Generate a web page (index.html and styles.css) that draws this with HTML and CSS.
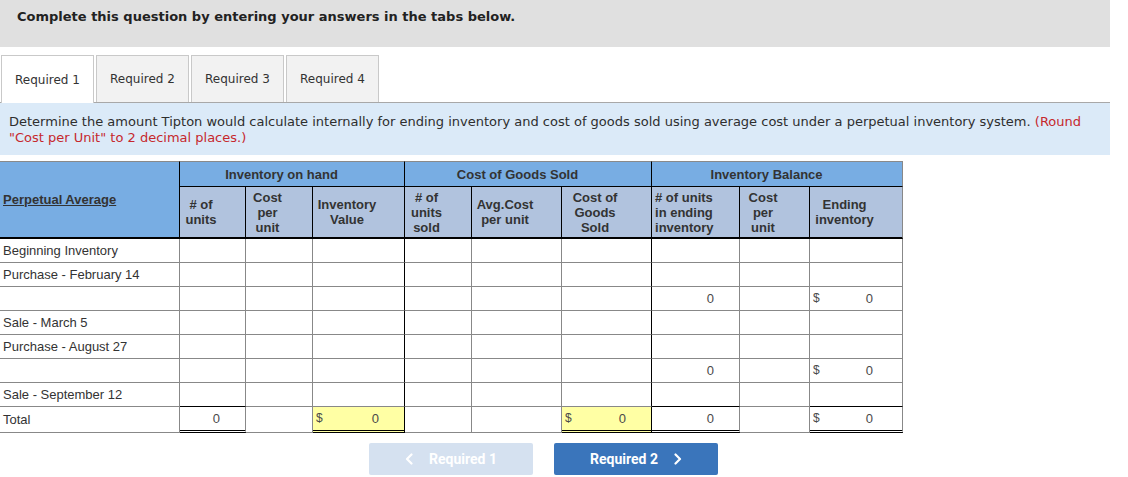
FILE: index.html
```html
<!DOCTYPE html>
<html>
<head>
<meta charset="utf-8">
<title>Perpetual Average</title>
<link rel="stylesheet" href="styles.css">
</head>
<body>
<div class="page">
  <div class="banner">Complete this question by entering your answers in the tabs below.</div>

  <div class="tabs">
    <div class="tab active">Required 1</div>
    <div class="tab">Required 2</div>
    <div class="tab">Required 3</div>
    <div class="tab">Required 4</div>
  </div>

  <div class="prompt">Determine the amount Tipton would calculate internally for ending inventory and cost of goods sold using average cost under a perpetual inventory system. <span class="red">(Round<br>"Cost per Unit" to 2 decimal places.)</span></div>

  <table class="grid">
    <colgroup>
      <col class="c-label">
      <col class="c66"><col class="c67"><col class="c92">
      <col class="c67"><col class="c90"><col class="c90">
      <col class="c88"><col class="c70"><col class="c93">
    </colgroup>
    <thead>
      <tr class="grp-row">
        <th rowspan="2" class="label-head"><span class="u">Perpetual Average</span></th>
        <th colspan="3" class="grp">Inventory on hand</th>
        <th colspan="3" class="grp">Cost of Goods Sold</th>
        <th colspan="3" class="grp last">Inventory Balance</th>
      </tr>
      <tr class="sub-row">
        <th class="sub">#&nbsp;of<br>units</th>
        <th class="sub">Cost<br>per<br>unit</th>
        <th class="sub">Inventory<br>Value</th>
        <th class="sub">#&nbsp;of<br>units<br>sold</th>
        <th class="sub">Avg.Cost<br>per unit</th>
        <th class="sub">Cost of<br>Goods<br>Sold</th>
        <th class="sub left">#&nbsp;of units<br>in ending<br>inventory</th>
        <th class="sub">Cost<br>per<br>unit</th>
        <th class="sub last">Ending<br>inventory</th>
      </tr>
    </thead>
    <tbody>
      <tr>
        <td class="lbl">Beginning Inventory</td>
        <td></td><td></td><td class="br"></td><td></td><td></td><td class="br"></td><td></td><td></td><td></td>
      </tr>
      <tr>
        <td class="lbl">Purchase - February 14</td>
        <td></td><td></td><td class="br"></td><td></td><td></td><td class="br"></td><td></td><td></td><td></td>
      </tr>
      <tr>
        <td class="lbl"></td>
        <td></td><td></td><td class="br"></td><td></td><td></td><td class="br"></td>
        <td class="num">0</td><td></td><td class="num money wide"><span class="dol">$</span>0</td>
      </tr>
      <tr>
        <td class="lbl">Sale - March 5</td>
        <td></td><td></td><td class="br"></td><td></td><td></td><td class="br"></td><td></td><td></td><td></td>
      </tr>
      <tr>
        <td class="lbl">Purchase - August 27</td>
        <td></td><td></td><td class="br"></td><td></td><td></td><td class="br"></td><td></td><td></td><td></td>
      </tr>
      <tr>
        <td class="lbl"></td>
        <td></td><td></td><td class="br"></td><td></td><td></td><td class="br"></td>
        <td class="num">0</td><td></td><td class="num money wide"><span class="dol">$</span>0</td>
      </tr>
      <tr>
        <td class="lbl">Sale - September 12</td>
        <td class="ab"></td><td></td><td class="br"></td><td></td><td></td><td class="br"></td><td class="ab"></td><td></td><td class="ab"></td>
      </tr>
      <tr class="total">
        <td class="lbl">Total</td>
        <td class="num dbl">0</td>
        <td></td>
        <td class="num money yellow dbl br"><span class="dol">$</span>0</td>
        <td></td><td></td>
        <td class="num money yellow dbl br"><span class="dol">$</span>0</td>
        <td class="num dbl">0</td>
        <td></td>
        <td class="num money wide dbl"><span class="dol">$</span>0</td>
      </tr>
    </tbody>
  </table>

  <div class="nav">
    <button class="btn disabled" type="button">
      <svg class="chev" width="8" height="12" viewBox="0 0 8 12"><polyline points="6.5,1.5 2,6 6.5,10.5" fill="none" stroke="#fff" stroke-width="2.2" stroke-linecap="round" stroke-linejoin="round"/></svg>
      <span>Required 1</span>
    </button>
    <button class="btn primary" type="button">
      <span>Required 2</span>
      <svg class="chev" width="8" height="12" viewBox="0 0 8 12"><polyline points="1.5,1.5 6,6 1.5,10.5" fill="none" stroke="#fff" stroke-width="2.2" stroke-linecap="round" stroke-linejoin="round"/></svg>
    </button>
  </div>
</div>
</body>
</html>
```

FILE: styles.css
```css
html, body {
  margin: 0;
  padding: 0;
  background: #ffffff;
}

.page {
  width: 1110px;
}

.banner {
  box-sizing: border-box;
  height: 47px;
  padding: 9px 0 0 17px;
  background: #e0e0e0;
  font-family: "DejaVu Sans", Verdana, sans-serif;
  font-weight: bold;
  font-size: 13px;
  line-height: 16px;
  color: #222222;
}

.tabs {
  display: flex;
  gap: 2px;
  margin-top: 8px;
  padding-left: 1px;
  border-bottom: 1px solid #a8a8a8;
}

.tab {
  box-sizing: border-box;
  height: 47px;
  width: 93px;
  display: flex;
  align-items: center;
  justify-content: center;
  border: 1px solid #c9c9c9;
  border-bottom: none;
  background: #f2f2f2;
  font-family: "DejaVu Sans", Verdana, sans-serif;
  font-size: 12px;
  color: #333333;
}

.tab.active {
  background: #ffffff;
  height: 48px;
  margin-bottom: -1px;
}

.prompt {
  background: #dbeaf8;
  padding: 11px 9px 9px 9px;
  font-family: "DejaVu Sans", Verdana, sans-serif;
  font-size: 13px;
  line-height: 16px;
  color: #2e2e2e;
  white-space: nowrap;
}

.red {
  color: #c6282d;
}

.grid {
  margin-top: 6px;
  width: 903px;
  table-layout: fixed;
  border-collapse: separate;
  border-spacing: 0;
  font-family: "Liberation Sans", Arial, sans-serif;
  font-size: 13px;
  color: #333333;
}

.c-label { width: 180px; }
.c66 { width: 66px; }
.c67 { width: 67px; }
.c70 { width: 70px; }
.c88 { width: 88px; }
.c90 { width: 90px; }
.c92 { width: 92px; }
.c93 { width: 93px; }

.grid th,
.grid td {
  padding: 0;
  border-right: 1px solid #888888;
  border-bottom: 1px solid #888888;
}

.grid th {
  font-weight: bold;
  color: #333333;
}

.grp-row th {
  border-top: 1px solid #8a8a8a;
}

.grp-row {
  height: 26px;
}

.label-head {
  background: #78ade3;
  text-align: left;
  vertical-align: middle;
  padding-left: 3px !important;
  border-right: 1px solid #000000 !important;
  border-bottom: 2px solid #000000 !important;
}

.u {
  text-decoration: underline;
}

.grp {
  background: #78ade3;
  text-align: center;
  font-weight: bold;
  padding: 0 21px 0 0 !important;
  border-right: 1px solid #000000 !important;
  border-bottom: 1px solid #000000 !important;
}

.grp.last,
.sub.last {
  border-right: 1px solid #888888 !important;
}

.sub-row {
  height: 52px;
}

.sub {
  background: #b1c3de;
  text-align: center;
  vertical-align: middle;
  line-height: 15px;
  padding: 0 24px 0 1px !important;
  border-right: 1px solid #000000 !important;
  border-bottom: 2px solid #000000 !important;
}

.sub.left {
  text-align: left;
  padding: 0 2px 0 3px !important;
}

.grid tbody tr {
  height: 24px;
}

.grid tbody tr.total {
  height: 26px;
}

.lbl {
  padding-left: 3px !important;
  white-space: nowrap;
  vertical-align: middle;
}

.grid td.br {
  border-right: 1px solid #000000;
}

.grid td.ab {
  border-bottom: 1px solid #000000;
}

.num {
  text-align: right;
  padding-right: 25px !important;
  color: #4a4a4a;
  font-size: 13px;
}

.money {
  padding-left: 3px !important;
}

.money.wide {
  padding-right: 29px !important;
}

.dol {
  float: left;
  font-size: 12px;
}

.yellow {
  background: #ffffa4;
}

.grid td.dbl {
  border-bottom: 3px double #000000;
}

.nav {
  display: flex;
  gap: 21px;
  margin-top: 10px;
  padding-left: 369px;
}

.btn {
  box-sizing: border-box;
  width: 164px;
  height: 32px;
  display: flex;
  align-items: center;
  justify-content: center;
  gap: 16px;
  border: none;
  border-radius: 2px;
  padding: 0;
  font-family: Roboto, "Liberation Sans", sans-serif;
  font-weight: bold;
  font-size: 14px;
  color: #ffffff;
}

.btn.disabled {
  background: #d5e1f0;
}

.btn.primary {
  background: #3a75bb;
}

.chev {
  display: block;
}
```
